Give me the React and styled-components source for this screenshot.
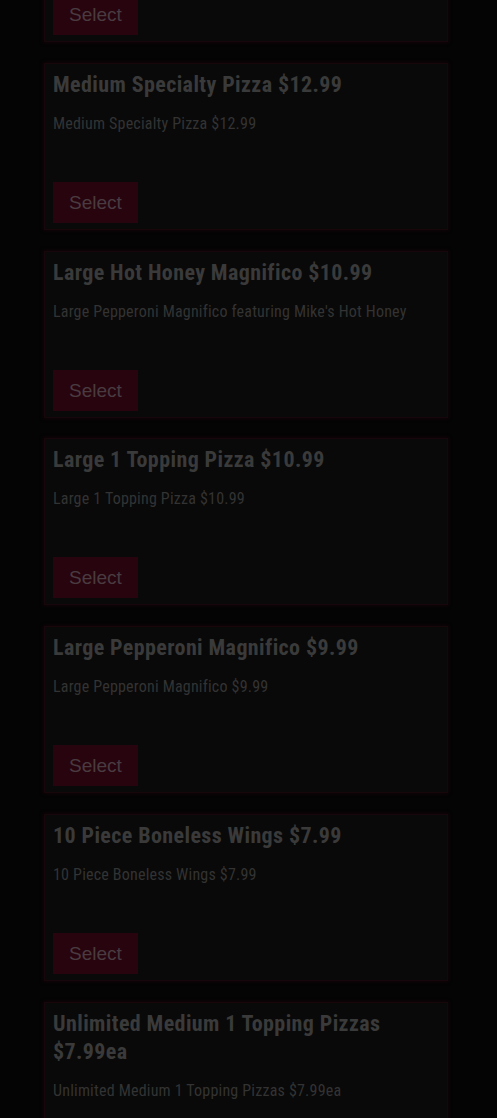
import React from "react";
import styled, { createGlobalStyle } from "styled-components";

const GlobalStyle = createGlobalStyle`
  html, body {
    margin: 0;
    padding: 0;
    background: #040404;
    overflow: hidden;
  }
  * { box-sizing: border-box; }
`;

const Page = styled.main`
  width: 497px;
  min-height: 1118px;
  background: #040404;
  padding: 0 49px 0 44px;
`;

const List = styled.div`
  display: flex;
  flex-direction: column;
  gap: 20.8px;
  margin-top: -125px;
`;

const Card = styled.article`
  display: flex;
  flex-direction: column;
  min-height: 167px;
  background: #090909;
  border: 1px solid #17070b;
  box-shadow: 0 0 3px 1px rgba(30, 3, 9, 0.5);
  padding: 7px 8px 6px 8px;
`;

const Title = styled.h2`
  margin: 0;
  font-family: "Roboto Condensed", Roboto, sans-serif;
  font-weight: 700;
  font-size: 22px;
  line-height: 28px;
  letter-spacing: 0.4px;
  color: #3a3a3a;
`;

const Description = styled.p`
  margin: 13px 0 0;
  font-family: "Roboto Condensed", Roboto, sans-serif;
  font-weight: 400;
  font-size: 16px;
  line-height: 24px;
  letter-spacing: 0.2px;
  color: #333333;
`;

const SelectButton = styled.button`
  margin-top: auto;
  align-self: flex-start;
  height: 41px;
  padding: 0 16px;
  border: none;
  border-radius: 0;
  background: #27040e;
  color: #4a3b40;
  font-family: "Liberation Sans", Arial, sans-serif;
  font-size: 19px;
  line-height: 41px;
  cursor: pointer;
`;

const items = [
  { title: "Large Specialty Pizza $14.99", desc: "Large Specialty Pizza $14.99" },
  { title: "Medium Specialty Pizza $12.99", desc: "Medium Specialty Pizza $12.99" },
  { title: "Large Hot Honey Magnifico $10.99", desc: "Large Pepperoni Magnifico featuring Mike's Hot Honey" },
  { title: "Large 1 Topping Pizza $10.99", desc: "Large 1 Topping Pizza $10.99" },
  { title: "Large Pepperoni Magnifico $9.99", desc: "Large Pepperoni Magnifico $9.99" },
  { title: "10 Piece Boneless Wings $7.99", desc: "10 Piece Boneless Wings $7.99" },
  { title: "Unlimited Medium 1 Topping Pizzas $7.99ea", desc: "Unlimited Medium 1 Topping Pizzas $7.99ea" },
];

export default function App() {
  return (
    <>
      <GlobalStyle />
      <Page>
        <List>
          {items.map((it) => (
            <Card key={it.title}>
              <Title>{it.title}</Title>
              <Description>{it.desc}</Description>
              <SelectButton type="button">Select</SelectButton>
            </Card>
          ))}
        </List>
      </Page>
    </>
  );
}
